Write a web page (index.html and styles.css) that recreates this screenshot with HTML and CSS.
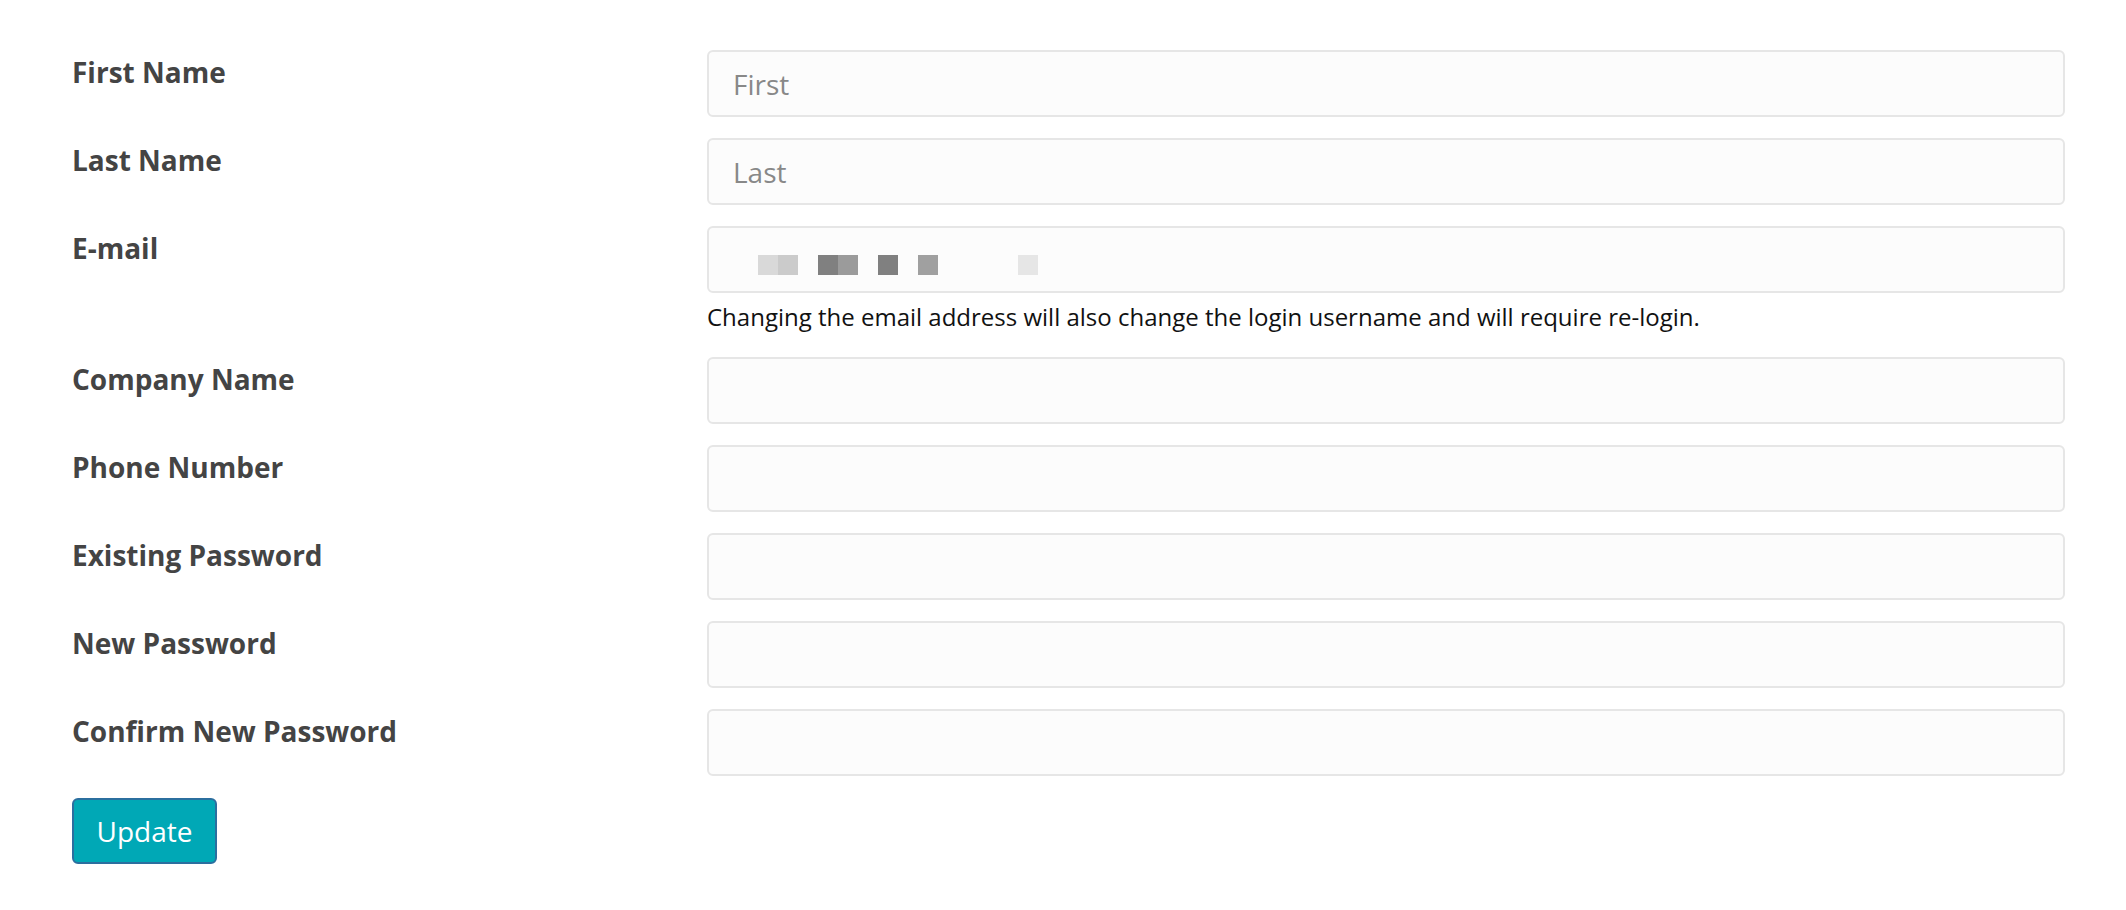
FILE: index.html
```html
<!DOCTYPE html>
<html lang="en">
<head>
  <meta charset="UTF-8" />
  <meta name="viewport" content="width=device-width, initial-scale=1.0"/>
  <title>Account Details</title>
  <link rel="stylesheet" href="styles.css">
</head>
<body>
  <form class="account-form">
    <div class="form-row">
      <label class="form-label" for="firstName">First Name</label>
      <input class="form-input" id="firstName" type="text" placeholder="First" />
    </div>

    <div class="form-row">
      <label class="form-label" for="lastName">Last Name</label>
      <input class="form-input" id="lastName" type="text" placeholder="Last" />
    </div>

    <!-- email value is pixelated in the original -->
    <div class="form-row">
      <label class="form-label">E-mail</label>
      <div class="form-field">
        <div class="form-input email-value">
          <span class="px c1"></span><span class="px c2"></span><span class="px"></span>
          <span class="px c3"></span><span class="px c4"></span><span class="px"></span>
          <span class="px c3"></span><span class="px"></span>
          <span class="px c5"></span><span class="px"></span><span class="px"></span>
          <span class="px"></span><span class="px"></span><span class="px c6"></span>
        </div>
        <div class="help-text">Changing the email address will also change the login username and will require re-login.</div>
      </div>
    </div>

    <div class="form-row">
      <label class="form-label" for="company">Company Name</label>
      <input class="form-input" id="company" type="text" />
    </div>

    <div class="form-row">
      <label class="form-label" for="phone">Phone Number</label>
      <input class="form-input" id="phone" type="text" />
    </div>

    <div class="form-row">
      <label class="form-label" for="oldPass">Existing Password</label>
      <input class="form-input" id="oldPass" type="password" />
    </div>

    <div class="form-row">
      <label class="form-label" for="newPass">New Password</label>
      <input class="form-input" id="newPass" type="password" />
    </div>

    <div class="form-row">
      <label class="form-label" for="confirmPass">Confirm New Password</label>
      <input class="form-input" id="confirmPass" type="password" />
    </div>

    <button class="update-btn" type="button">Update</button>
  </form>
</body>
</html>
```

FILE: styles.css
```css
body {
  margin: 0;
  background-color: #ffffff;
  font-family: "Open Sans", "Liberation Sans", sans-serif;
  color: #222;
}

.account-form {
  padding: 50px 0 0 72px;
}

.form-row {
  display: grid;
  grid-template-columns: 635px 1358px;
  margin-bottom: 21px;
}

.form-label {
  font-size: 28px;
  font-weight: bold;
  color: #444;
  line-height: 38px;
  padding-top: 3px;
}

.form-field {
  display: flex;
  flex-direction: column;
}

.form-input {
  box-sizing: border-box;
  width: 100%;
  height: 67px;
  padding: 0 24px;
  border: 2px solid #e6e6e6;
  border-radius: 6px;
  background-color: #fcfcfc;
  font-family: inherit;
  font-size: 28px;
  color: #333;
  outline: none;
}

.form-input::placeholder {
  color: #888;
}

.email-value {
  display: flex;
  align-items: flex-start;
  padding: 27px 0 0 49px;
}

.px {
  width: 20px;
  height: 20px;
}

.c1 { background-color: #d9d9d9; }
.c2 { background-color: #cbcbcb; }
.c3 { background-color: #808080; }
.c4 { background-color: #9b9b9b; }
.c5 { background-color: #a0a0a0; }
.c6 { background-color: #e6e6e6; }

.help-text {
  margin-top: 5px;
  font-size: 24px;
  line-height: 38px;
  color: #111;
}

.update-btn {
  width: 145px;
  height: 66px;
  margin-top: 1px;
  padding: 0;
  border: 2px solid #2b6f9f;
  border-radius: 6px;
  background-color: #00a8b6;
  color: #fff;
  font-family: inherit;
  font-size: 28px;
  cursor: pointer;
}
```
